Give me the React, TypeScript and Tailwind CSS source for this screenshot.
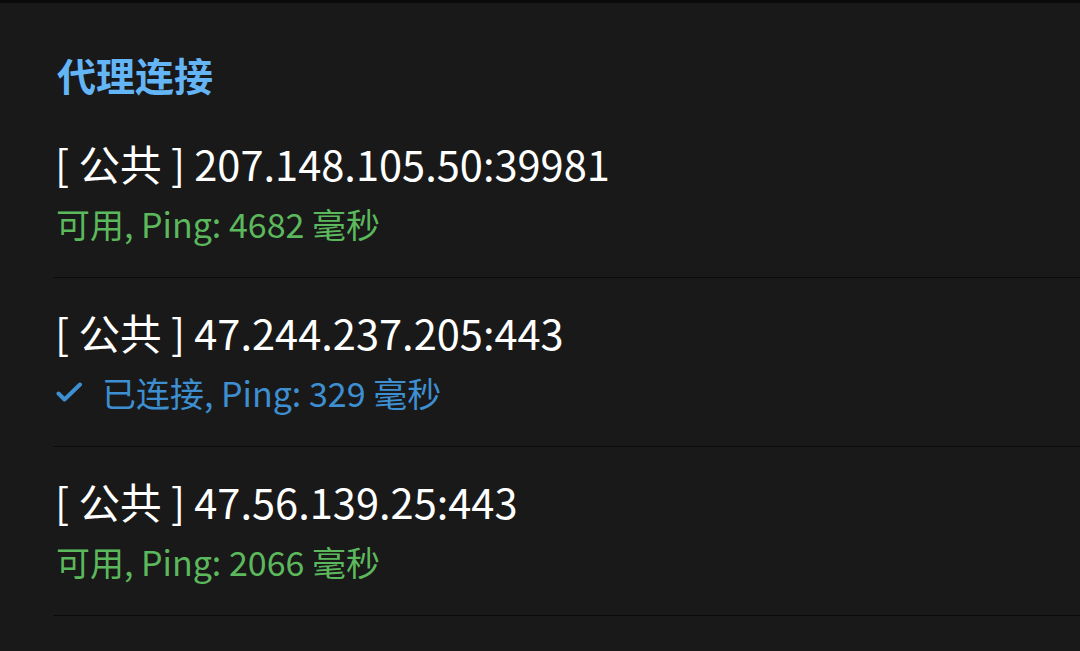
type Proxy = {
  host: string;
  status: string;
  ping: number;
  connected?: boolean;
};

const proxies: Proxy[] = [
  { host: "207.148.105.50:39981", status: "可用", ping: 4682 },
  { host: "47.244.237.205:443", status: "已连接", ping: 329, connected: true },
  { host: "47.56.139.25:443", status: "可用", ping: 2066 },
];

function CheckMark() {
  return (
    <svg width="27" height="22" viewBox="0 0 27 22" className="mr-[19px] shrink-0" fill="none">
      <path d="M2.5 11.5 8.5 17.5 24 2.5" stroke="currentColor" strokeWidth="4" strokeLinecap="round" strokeLinejoin="round" />
    </svg>
  );
}

function ProxyRow({ proxy }: { proxy: Proxy }) {
  return (
    <div className="border-b border-[#0b0b0b] pt-[24px] pb-[31px]">
      <div className="pl-[2px] text-[41.6px] leading-[60px] text-white">[ 公共 ] {proxy.host}</div>
      <div
        className={
          proxy.connected
            ? "mt-[9px] flex items-center pl-[3px] text-[34px] leading-[44px] text-[#3d8fd1]"
            : "mt-[9px] flex items-center pl-[3px] text-[34px] leading-[44px] text-[#5cb85c]"
        }
      >
        {proxy.connected && <CheckMark />}
        <span>
          {proxy.status}, Ping: {proxy.ping} 毫秒
        </span>
      </div>
    </div>
  );
}

export default function App() {
  return (
    <div
      className="h-[651px] w-[1080px] overflow-hidden border-t-[3px] border-[#0a0a0a] bg-[#191919]"
      style={{ fontFamily: '"Noto Sans CJK SC", "Noto Sans", sans-serif' }}
    >
      <div className="pl-[53px]">
        <h2 className="pl-[4px] pt-[43px] pb-[7px] text-[39px] font-bold leading-[56px] text-[#64b5f6]">
          代理连接
        </h2>
        {proxies.map((p) => (
          <ProxyRow key={p.host} proxy={p} />
        ))}
      </div>
    </div>
  );
}
